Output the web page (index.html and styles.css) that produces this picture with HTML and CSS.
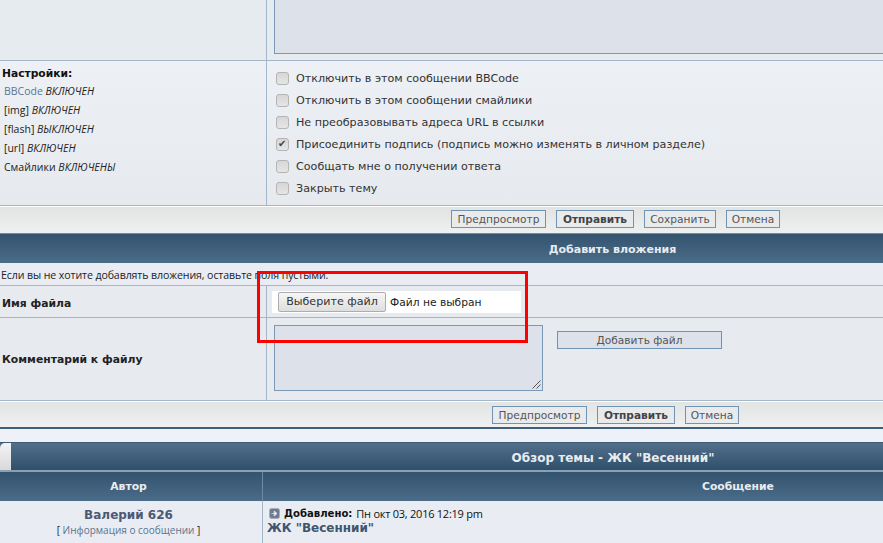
FILE: index.html
```html
<!DOCTYPE html>
<html lang="ru">
<head>
<meta charset="utf-8">
<title>Ответ</title>
<link rel="stylesheet" href="styles.css">
</head>
<body>
<div class="row row-text">
  <div class="cell-l"></div>
  <div class="cell-r"><div class="ta ta-top"></div></div>
</div>
<div class="row row-opts">
  <div class="cell-l opts-l">
    <div class="lead">Настройки:</div>
    <ul class="status">
      <li><a class="lnk">BBCode</a> <i>ВКЛЮЧЕН</i></li>
      <li>[img] <i>ВКЛЮЧЕН</i></li>
      <li>[flash] <i>ВЫКЛЮЧЕН</i></li>
      <li>[url] <i>ВКЛЮЧЕН</i></li>
      <li>Смайлики <i>ВКЛЮЧЕНЫ</i></li>
    </ul>
  </div>
  <div class="cell-r opts-r">
    <label class="opt"><input type="checkbox">Отключить в этом сообщении BBCode</label>
    <label class="opt"><input type="checkbox">Отключить в этом сообщении смайлики</label>
    <label class="opt"><input type="checkbox">Не преобразовывать адреса URL в ссылки</label>
    <label class="opt"><input type="checkbox" checked>Присоединить подпись (подпись можно изменять в личном разделе)</label>
    <label class="opt"><input type="checkbox">Сообщать мне о получении ответа</label>
    <label class="opt"><input type="checkbox">Закрыть тему</label>
  </div>
</div>
<div class="bar bar-a">
  <span class="btn btn-preview">Предпросмотр</span><span class="btn strong">Отправить</span><span class="btn btn-save">Сохранить</span><span class="btn btn-cancel">Отмена</span>
</div>
<div class="head head-down head-attach">Добавить вложения</div>
<div class="note">Если вы не хотите добавлять вложения, оставьте поля пустыми.</div>
<div class="row row-file">
  <div class="cell-l name">Имя файла</div>
  <div class="cell-r file-r">
    <div class="file"><span class="choose">Выберите файл</span><span>Файл не выбран</span></div>
  </div>
</div>
<div class="row row-comment">
  <div class="cell-l name">Комментарий к файлу</div>
  <div class="cell-r comment-r">
    <div class="ta ta-small">
      <svg class="grip" width="9" height="9" viewBox="0 0 9 9"><path d="M8.5 0.5 0.5 8.5M8.5 4.5 4.5 8.5" stroke="#555" fill="none"/></svg>
    </div>
    <span class="add">Добавить файл</span>
  </div>
</div>
<div class="bar bar-b">
  <span class="btn btn-preview">Предпросмотр</span><span class="btn strong">Отправить</span><span class="btn btn-cancel">Отмена</span>
</div>
<div class="gap"></div>
<div class="head head-up">
  <span class="corner"></span>
  <span class="head-title">Обзор темы - ЖК "Весенний"</span>
</div>
<div class="cols">
  <div class="col-a">Автор</div>
  <div class="col-b">Сообщение</div>
</div>
<div class="post">
  <div class="author">
    <div class="uname">Валерий 626</div>
    <div class="info">[ <a class="lnk">Информация о сообщении</a> ]</div>
  </div>
  <div class="msg">
    <div class="meta">
      <svg class="mini" width="11" height="11" viewBox="0 0 11 11"><rect x="0.5" y="0.5" width="10" height="10" rx="2" fill="#6f7c90" stroke="#a3aebd"/><path d="M2.5 5.5H5.5M5.2 3l2.8 2.5L5.2 8z" fill="#e8ecf2" stroke="#e8ecf2" stroke-width="0.7"/></svg>
      <b>Добавлено:</b> <span class="date">Пн окт 03, 2016 12:19 pm</span>
    </div>
    <div class="subject">ЖК "Весенний"</div>
  </div>
</div>
<div class="redbox"></div>
</body>
</html>
```
FILE: styles.css
```css
html, body {
  margin: 0;
  padding: 0;
  height: 543px;
  overflow: hidden;
}
body {
  position: relative;
  background: #eef1f7;
  font-family: "DejaVu Sans", Verdana, sans-serif;
  font-size: 11px;
  color: #222;
}
.row {
  display: grid;
  grid-template-columns: 267px 1fr;
  border-bottom: 1px solid #a4b7ca;
}
.cell-l {
  background: #e7ebf0;
  border-right: 1px solid #a4b7ca;
}
.cell-r {
  background: #e7ebf0;
  padding-left: 7px;
}
.row-text { height: 60px; }
.row-text .cell-l, .row-text .cell-r { background: #e6ebf0; }
.ta {
  box-sizing: border-box;
  background: #dde1e9;
  border: 1px solid #7a9ab8;
}
.ta-top {
  height: 54px;
  margin-right: -4px;
  border-top: 0;
  border-right: 0;
}
.row-opts { height: 144px; }
.opts-l {
  padding: 6px 0 0 2px;
  background: linear-gradient(#edf0f5, #e6eaef);
}
.lead {
  font-size: 10.7px;
  font-weight: bold;
  color: #111;
  line-height: 14px;
}
.status {
  list-style: none;
  margin: 1px 0 0 2px;
  padding: 0;
  font-family: "Open Sans", sans-serif;
  font-size: 10.5px;
  line-height: 19px;
}
.status i { color: #222; }
.lnk { color: #5a7590; }
.opts-r {
  display: flex;
  flex-direction: column;
  padding-top: 6px;
  background: linear-gradient(#edf0f5, #e6eaef);
}
.opt {
  display: flex;
  align-items: center;
  height: 22px;
  font-size: 11.13px;
  color: #333;
}
.opt input {
  appearance: none;
  position: relative;
  box-sizing: border-box;
  width: 13px;
  height: 13px;
  margin: 0 7px 0 2px;
  background: linear-gradient(#d6d6d6, #e6e6e6);
  border: 1px solid #b4b4b4;
  border-radius: 3px;
}
.opt input:checked::after {
  content: "✔";
  position: absolute;
  left: 1px;
  top: -2px;
  font-size: 10px;
  line-height: 14px;
  color: #444;
}
.bar {
  display: flex;
  justify-content: flex-end;
  align-items: center;
  gap: 10px;
  height: 27px;
  box-sizing: border-box;
  background: linear-gradient(#e2e4e4, #eff0f1);
  border-top: 1px solid #fff;
}
.bar-a { padding: 0 103px 3px 0; }
.bar-b {
  padding: 0 144px 0 0;
  border-bottom: 2px solid #3f5e7a;
  height: 28px;
}
.btn {
  box-sizing: border-box;
  height: 18px;
  line-height: 16px;
  text-align: center;
  font-size: 10.6px;
  border: 1px solid #6f93b3;
  background: #e8eaec;
  color: #555;
}
.btn-preview { width: 95px; }
.btn-save { width: 72px; }
.btn-cancel { width: 54px; }
.btn.strong {
  width: 78px;
  font-weight: bold;
  color: #444;
}
.head {
  color: #e8ecf0;
  font-weight: bold;
  text-align: center;
}
.head-down {
  height: 30px;
  line-height: 31px;
  background: linear-gradient(#33536f, #4b6c88);
}
.head-attach {
  padding-left: 342px;
  box-sizing: border-box;
  border-top: 1px solid #6f8aa3;
}
.note {
  height: 22px;
  line-height: 24px;
  padding-left: 1px;
  font-family: "Open Sans", sans-serif;
  font-size: 10.6px;
  letter-spacing: -0.1px;
  background: #e9ecf2;
  border-bottom: 1px solid #a4b7ca;
  color: #222;
}
.name {
  display: flex;
  align-items: center;
  padding-left: 2px;
  font-size: 10.8px;
  font-weight: bold;
  color: #222;
}
.row-file { height: 31px; }
.row-file .name { padding-top: 4px; }
.file-r {
  display: flex;
  padding-top: 5px;
  box-sizing: border-box;
}
.file {
  display: flex;
  align-items: center;
  box-sizing: border-box;
  width: 249px;
  height: 22px;
  margin-left: -2px;
  background: #fff;
  padding-left: 6px;
  font-size: 10.7px;
  color: #222;
}
.choose {
  box-sizing: border-box;
  width: 108px;
  height: 20px;
  line-height: 18px;
  margin-right: 4px;
  text-align: center;
  font-size: 11.1px;
  background: linear-gradient(#f6f6f6, #dedede);
  border: 1px solid #adadad;
  border-radius: 2px;
  color: #333;
}
.row-comment { height: 82px; }
.comment-r {
  display: flex;
  padding-top: 7px;
}
.ta-small {
  position: relative;
  width: 269px;
  height: 66px;
}
.grip {
  position: absolute;
  right: 1px;
  bottom: 1px;
}
.add {
  box-sizing: border-box;
  width: 165px;
  height: 18px;
  line-height: 16px;
  margin: 6px 0 0 14px;
  text-align: center;
  font-size: 10.6px;
  background: #dde1e9;
  border: 1px solid #6f93b3;
  color: #555;
}
.gap { height: 13px; }
.head-up {
  position: relative;
  height: 30px;
  line-height: 30px;
  box-sizing: border-box;
  font-size: 12px;
  background: linear-gradient(#526f8b, #2f4f6b);
  border-top: 1px solid #3d5b76;
  border-bottom: 2px solid #8aa0b5;
}
.head-title { padding-left: 343px; }
.corner {
  position: absolute;
  left: 0;
  top: 0;
  width: 11px;
  height: 27px;
  background: linear-gradient(#f4f4f4, #d8d9da);
  border-top-left-radius: 5px;
}
.cols {
  display: grid;
  grid-template-columns: 263px 1fr;
  height: 29px;
  line-height: 30px;
  text-align: center;
  font-size: 10.8px;
  font-weight: bold;
  color: #e8ecf0;
  background: linear-gradient(#33536f, #4b6c88);
}
.col-a {
  padding-right: 5px;
  border-right: 1px solid #6f8aa3;
}
.col-b {
  padding-left: 439px;
  text-align: left;
}
.post {
  display: grid;
  grid-template-columns: 263px 1fr;
  background: #e9ecf2;
  height: 42px;
}
.author {
  padding: 7px 5px 0 0;
  text-align: center;
  border-right: 1px solid #a4b7ca;
}
.uname {
  font-weight: bold;
  font-size: 12px;
  line-height: 15px;
  color: #4a5a75;
}
.info {
  font-family: "Open Sans", sans-serif;
  font-size: 10px;
  line-height: 14px;
}
.msg { padding: 5px 0 0 4px; }
.meta {
  display: flex;
  align-items: center;
  gap: 4px;
  height: 15px;
  font-size: 10.1px;
  color: #111;
  padding-left: 2px;
}
.date {
  font-family: "Open Sans", sans-serif;
  font-size: 11px;
  letter-spacing: -0.25px;
}
.subject {
  font-weight: bold;
  font-size: 12px;
  line-height: 14px;
  color: #3f556f;
}
.redbox {
  position: absolute;
  left: 257px;
  top: 271px;
  width: 265px;
  height: 66px;
  border: 3px solid #f00;
}
```
